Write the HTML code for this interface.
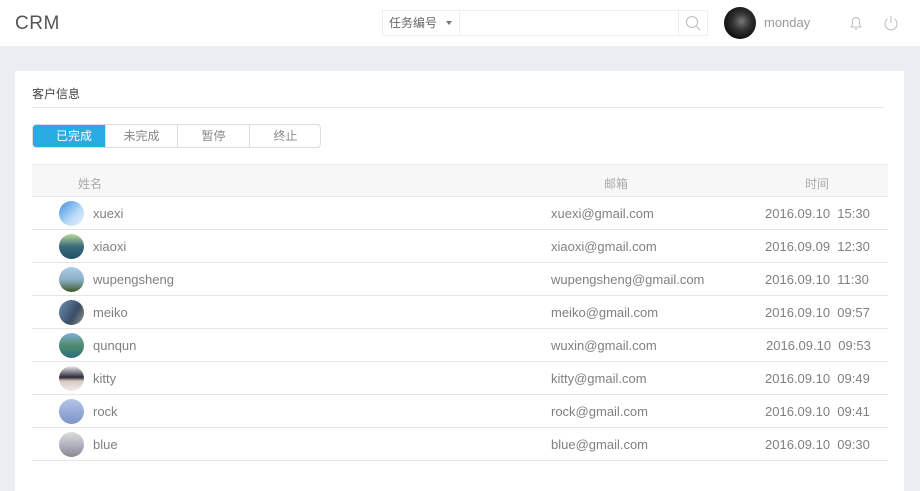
<!DOCTYPE html>
<html><head><meta charset="utf-8"><style>
*{margin:0;padding:0;box-sizing:border-box}
body{width:920px;height:480px;background:#eaedf1;font-family:"Liberation Sans","Noto Sans CJK SC",sans-serif;color:#888;position:relative;overflow:hidden}
.hdr{position:absolute;left:0;top:0;width:920px;height:46px;background:#fff}
.logo{position:absolute;left:15px;top:13px;font-size:19px;color:#555;letter-spacing:0.5px}
.search{position:absolute;left:382px;top:10px;width:326px;height:26px;border:1px solid #eceff2}
.search .sel{position:absolute;left:0;top:0;width:77px;height:24px;border-right:1px solid #eceff2;font-size:12px;line-height:24px;padding-left:6px;color:#666}
.search .sel:after{content:"";position:absolute;left:63px;top:10px;border:3px solid transparent;border-top:4px solid #777}
.search .ic{position:absolute;right:0;top:0;width:29px;height:24px;border-left:1px solid #eceff2}
.av{position:absolute;left:724px;top:7px;width:32px;height:32px;border-radius:50%;background:radial-gradient(circle at 55% 45%,#777 0,#333 35%,#111 70%)}
.user{position:absolute;left:764px;top:15px;font-size:13px;color:#9a9a9a}
.card{position:absolute;left:15px;top:71px;width:889px;height:420px;background:#fff}
.title{position:absolute;left:17px;top:14px;font-size:12px;color:#444}
.line{position:absolute;left:17px;top:36px;width:852px;height:1px;background:#e8e8e8}
.tabs{position:absolute;left:17px;top:53px;width:289px;height:24px;border:1px solid #ddd;border-radius:4px;display:flex;overflow:hidden}
.tabs div{flex:0 0 72px;text-align:center;font-size:12px;line-height:22px;color:#888;border-left:1px solid #ddd}
.tabs div:first-child{border-left:0;background:#29abe2;color:#fff;text-indent:10px}
.th{position:absolute;left:17px;top:93px;width:856px;height:33px;background:#f7f7f7;border-top:1px solid #eee;border-bottom:1px solid #e5e5e5;font-size:12px;color:#aaa}
.th span{position:absolute;top:10px}
.row{position:absolute;left:17px;width:856px;height:33px;border-bottom:1px solid #e5e5e5;font-size:13px;color:#808080}
.row span{position:absolute;top:9px}
.row i{position:absolute;left:27px;top:4px;width:25px;height:25px;border-radius:50%}
</style></head><body>
<div class="hdr">
<div class="logo">CRM</div>
<div class="search"><div class="sel">任务编号</div><div class="ic"><svg width="29" height="24"><circle cx="13" cy="11" r="5.5" fill="none" stroke="#bbb" stroke-width="1"/><line x1="17" y1="15" x2="21" y2="19" stroke="#bbb"/></svg></div></div>
<div class="av"></div>
<div class="user">monday</div>
<svg style="position:absolute;left:848px;top:14px" width="16" height="18"><path d="M3 13 L4.5 11 V7 a3.5 3.5 0 0 1 7 0 V11 L13 13 Z M6.5 15 h3" fill="none" stroke="#bbb" stroke-width="1"/></svg>
<svg style="position:absolute;left:882px;top:14px" width="18" height="18"><path d="M5.5 5 A6 6 0 1 0 12.5 5" fill="none" stroke="#bbb" stroke-width="1"/><line x1="9" y1="2" x2="9" y2="9" stroke="#bbb"/></svg>
</div>
<div class="card">
<div class="title">客户信息</div>
<div class="line"></div>
<div class="tabs"><div>已完成</div><div>未完成</div><div>暂停</div><div>终止</div></div>
<div class="th"><span style="left:46px">姓名</span><span style="left:572px">邮箱</span><span style="left:773px">时间</span></div>

<div class="row" style="top:126px"><i style="background:linear-gradient(135deg,#3f8fe0,#b9dbf6 60%,#eef)"></i><span style="left:61px">xuexi</span><span style="left:519px">xuexi@gmail.com</span><span style="left:733px">2016.09.10&nbsp; 15:30</span></div>
<div class="row" style="top:159px"><i style="background:linear-gradient(#b8dc9a,#3b6b7a 50%,#1f4f6a)"></i><span style="left:61px">xiaoxi</span><span style="left:519px">xiaoxi@gmail.com</span><span style="left:733px">2016.09.09&nbsp; 12:30</span></div>
<div class="row" style="top:192px"><i style="background:linear-gradient(#a9cde6,#8db0c8 50%,#3c5a2a)"></i><span style="left:61px">wupengsheng</span><span style="left:519px">wupengsheng@gmail.com</span><span style="left:733px">2016.09.10&nbsp; 11:30</span></div>
<div class="row" style="top:225px"><i style="background:linear-gradient(120deg,#6a8fb5,#3a4d66 60%,#998)"></i><span style="left:61px">meiko</span><span style="left:519px">meiko@gmail.com</span><span style="left:733px">2016.09.10&nbsp; 09:57</span></div>
<div class="row" style="top:258px"><i style="background:linear-gradient(#7fb0d8,#4f8a6a 50%,#2b6f7f)"></i><span style="left:61px">qunqun</span><span style="left:519px">wuxin@gmail.com</span><span style="left:734px">2016.09.10&nbsp; 09:53</span></div>
<div class="row" style="top:291px"><i style="background:linear-gradient(#eee,#2a2a3a 45%,#d8c8c0 60%,#eee)"></i><span style="left:61px">kitty</span><span style="left:519px">kitty@gmail.com</span><span style="left:733px">2016.09.10&nbsp; 09:49</span></div>
<div class="row" style="top:324px"><i style="background:linear-gradient(#b3c4e6,#7c94c8)"></i><span style="left:61px">rock</span><span style="left:519px">rock@gmail.com</span><span style="left:733px">2016.09.10&nbsp; 09:41</span></div>
<div class="row" style="top:357px"><i style="background:linear-gradient(#ddd,#aab 60%,#888)"></i><span style="left:61px">blue</span><span style="left:519px">blue@gmail.com</span><span style="left:733px">2016.09.10&nbsp; 09:30</span></div>
</div>
</body></html>
